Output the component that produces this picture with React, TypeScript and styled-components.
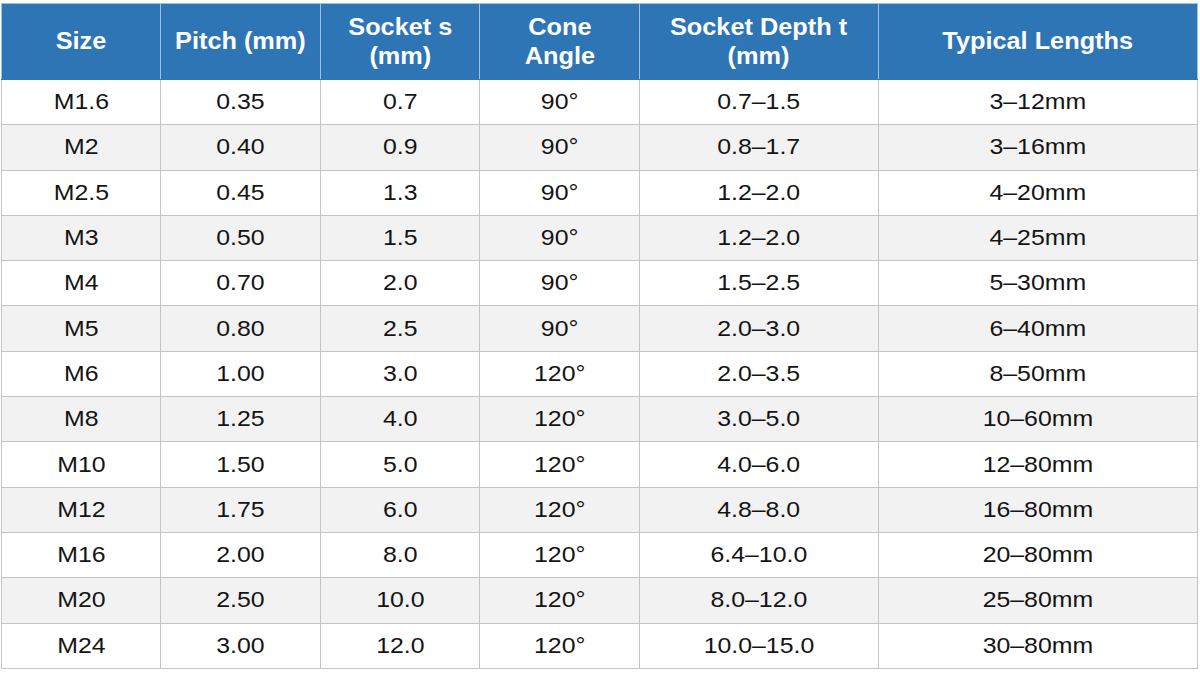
import React from "react";
import styled, { createGlobalStyle } from "styled-components";

const GlobalStyle = createGlobalStyle`
  html, body {
    margin: 0;
    padding: 0;
    background: #ffffff;
  }
  body {
    font-family: "Liberation Sans", Arial, sans-serif;
  }
`;

type Row = {
  size: string;
  pitch: string;
  socket: string;
  angle: string;
  depth: string;
  lengths: string;
};

const rows: Row[] = [
  { size: "M1.6", pitch: "0.35", socket: "0.7", angle: "90°", depth: "0.7–1.5", lengths: "3–12mm" },
  { size: "M2", pitch: "0.40", socket: "0.9", angle: "90°", depth: "0.8–1.7", lengths: "3–16mm" },
  { size: "M2.5", pitch: "0.45", socket: "1.3", angle: "90°", depth: "1.2–2.0", lengths: "4–20mm" },
  { size: "M3", pitch: "0.50", socket: "1.5", angle: "90°", depth: "1.2–2.0", lengths: "4–25mm" },
  { size: "M4", pitch: "0.70", socket: "2.0", angle: "90°", depth: "1.5–2.5", lengths: "5–30mm" },
  { size: "M5", pitch: "0.80", socket: "2.5", angle: "90°", depth: "2.0–3.0", lengths: "6–40mm" },
  { size: "M6", pitch: "1.00", socket: "3.0", angle: "120°", depth: "2.0–3.5", lengths: "8–50mm" },
  { size: "M8", pitch: "1.25", socket: "4.0", angle: "120°", depth: "3.0–5.0", lengths: "10–60mm" },
  { size: "M10", pitch: "1.50", socket: "5.0", angle: "120°", depth: "4.0–6.0", lengths: "12–80mm" },
  { size: "M12", pitch: "1.75", socket: "6.0", angle: "120°", depth: "4.8–8.0", lengths: "16–80mm" },
  { size: "M16", pitch: "2.00", socket: "8.0", angle: "120°", depth: "6.4–10.0", lengths: "20–80mm" },
  { size: "M20", pitch: "2.50", socket: "10.0", angle: "120°", depth: "8.0–12.0", lengths: "25–80mm" },
  { size: "M24", pitch: "3.00", socket: "12.0", angle: "120°", depth: "10.0–15.0", lengths: "30–80mm" },
];

const columns = [159, 160, 159, 160, 239, 319];

const headers: React.ReactNode[] = [
  "Size",
  "Pitch (mm)",
  <>Socket s<br />(mm)</>,
  <>Cone<br />Angle</>,
  <>Socket Depth t<br />(mm)</>,
  "Typical Lengths",
];

const Page = styled.div`
  padding: 3px 3px 0 1px;
`;

const Table = styled.table`
  width: 1196px;
  border-collapse: collapse;
  table-layout: fixed;
`;

const HeadRow = styled.tr`
  height: 76px;
  background: #2e75b6;
`;

const HeadCell = styled.th`
  padding: 0;
  border: 1px solid #9fc0e0;
  border-bottom-color: #2e75b6;
  color: #ffffff;
  font-weight: 700;
  font-size: 23px;
  line-height: 29px;
  text-align: center;
  vertical-align: middle;
`;

const BodyRow = styled.tr<{ $striped: boolean }>`
  height: 45.3px;
  background: ${(p) => (p.$striped ? "#f2f2f2" : "#ffffff")};
`;

const Cell = styled.td`
  padding: 0;
  border: 1px solid #c4c4c4;
  color: #141414;
  font-size: 22px;
  text-align: center;
  vertical-align: middle;
`;

// the source picture is a little wider than Arial, stretch the glyphs to match
const Wide = styled.span<{ $scale: number }>`
  display: inline-block;
  transform: scaleX(${(p) => p.$scale});
  transform-origin: center;
  white-space: nowrap;
`;

export default function App() {
  return (
    <Page>
      <GlobalStyle />
      <Table>
        <colgroup>
          {columns.map((w, i) => (
            <col key={i} style={{ width: w }} />
          ))}
        </colgroup>
        <thead>
          <HeadRow>
            {headers.map((h, i) => (
              <HeadCell key={i}>
                <Wide $scale={1.1}>{h}</Wide>
              </HeadCell>
            ))}
          </HeadRow>
        </thead>
        <tbody>
          {rows.map((r, i) => (
            <BodyRow key={r.size} $striped={i % 2 === 1}>
              {[r.size, r.pitch, r.socket, r.angle, r.depth, r.lengths].map((v, j) => (
                <Cell key={j}>
                  <Wide $scale={1.13}>{v}</Wide>
                </Cell>
              ))}
            </BodyRow>
          ))}
        </tbody>
      </Table>
    </Page>
  );
}
